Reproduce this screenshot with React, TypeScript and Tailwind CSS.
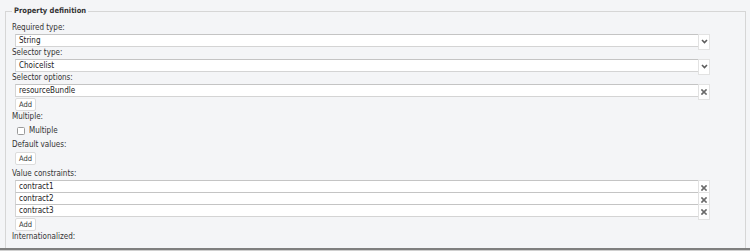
import React from "react";

const Chevron = () => (
  <svg width="7" height="5" viewBox="0 0 7 5" className="block">
    <polyline points="1,1 3.5,3.5 6,1" fill="none" stroke="#5c5c5c" strokeWidth="1.6" />
  </svg>
);

const Cross = () => (
  <svg width="6" height="6" viewBox="0 0 6 6" className="block">
    <path d="M1 1 L5 5 M5 1 L1 5" stroke="#6a6a6a" strokeWidth="1.7" strokeLinecap="square" />
  </svg>
);

function Label({ children, className = "" }: { children: React.ReactNode; className?: string }) {
  return <div className={"h-[12px] leading-[12px] text-[#333] whitespace-nowrap " + className}>{children}</div>;
}

function FieldRow({ value, icon, className = "" }: { value: string; icon: "chevron" | "cross"; className?: string }) {
  return (
    <div className={"flex items-start h-[13px] ml-[3px] mr-[29px] " + className}>
      <div className="flex-1 h-[13px] bg-white border border-[#d4d4d4] border-t-[#c4c4c4] pl-[3px] leading-[11px] text-[#222] whitespace-nowrap">
        {value}
      </div>
      <div className="relative z-10 -ml-px w-[12px] h-[16px] bg-white border border-[#e2e2e2] flex justify-center pt-[3.5px]">
        {icon === "chevron" ? <Chevron /> : <Cross />}
      </div>
    </div>
  );
}

function AddButton({ className = "" }: { className?: string }) {
  return (
    <div className={"ml-[3px] w-[21px] h-[13px] bg-white border border-[#dcdcdc] rounded-[2px] flex items-center justify-center text-[7.5px] leading-[8px] text-[#333] " + className}>
      Add
    </div>
  );
}

export default function App() {
  return (
    <div className="w-[750px] h-[251px] bg-[#f4f5f7] flex flex-col font-['DejaVu_Sans_Condensed','Liberation_Sans',sans-serif] text-[8px]">
      <div className="h-[248px] overflow-hidden">
        <fieldset className="ml-[5px] mr-[4px] mt-[5px] min-h-[270px] border border-[#d6d6d6] px-[6px] pt-[5px]">
          <legend className="px-[2px] h-[12px] leading-[12px] font-bold text-[7.5px] text-[#333]">Property definition</legend>
          <Label>Required type:</Label>
          <FieldRow value="String" icon="chevron" />
          <Label>Selector type:</Label>
          <FieldRow value="Choicelist" icon="chevron" />
          <Label>Selector options:</Label>
          <FieldRow value="resourceBundle" icon="cross" />
          <AddButton className="mt-[1px]" />
          <Label>Multiple:</Label>
          <div className="h-[16px] flex items-center">
            <div className="ml-[5px] w-[8px] h-[8px] bg-white border border-[#9a9a9a] rounded-[1.5px]" />
            <span className="ml-[4px] text-[#333]">Multiple</span>
          </div>
          <Label>Default values:</Label>
          <AddButton className="mt-[1px]" />
          <Label className="mt-[3px]">Value constraints:</Label>
          <FieldRow value="contract1" icon="cross" />
          <FieldRow value="contract2" icon="cross" className="-mt-px" />
          <FieldRow value="contract3" icon="cross" className="-mt-px" />
          <AddButton className="mt-[1px]" />
          <Label>Internationalized:</Label>
        </fieldset>
      </div>
      <div className="h-[2px] bg-[#7f7f7f]" />
      <div className="h-[1px] bg-[#d0d0d0]" />
    </div>
  );
}
